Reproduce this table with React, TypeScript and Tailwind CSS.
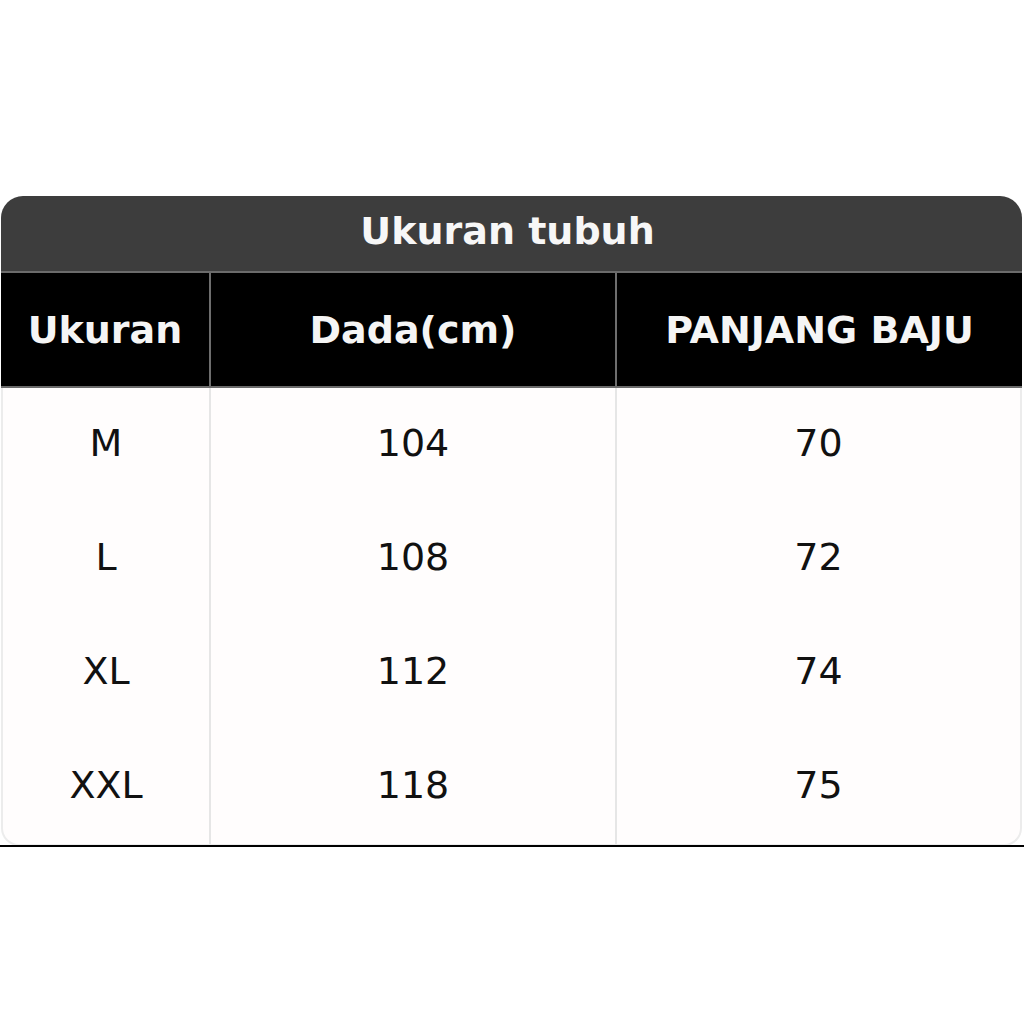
const rows = [
  { size: "M", dada: "104", panjang: "70" },
  { size: "L", dada: "108", panjang: "72" },
  { size: "XL", dada: "112", panjang: "74" },
  { size: "XXL", dada: "118", panjang: "75" },
];

export default function App() {
  return (
    <div
      className="w-[1024px] h-[1024px] bg-white pt-[196px]"
      style={{ fontFamily: '"DejaVu Sans", Verdana, sans-serif' }}
    >
      <div className="ml-[1px] mr-[2px]">
        {/* Title */}
        <div className="h-[75px] pb-[4px] pr-[8px] bg-[#3d3d3d] rounded-t-[22px] flex items-center justify-center text-[#f7f7f7] text-[38px] font-bold">
          Ukuran tubuh
        </div>
        <div className="h-[2px] bg-[#6b6b6b]" />

        {/* Header */}
        <div className="grid grid-cols-[208px_2px_404px_2px_1fr] h-[113px] bg-black text-[#f5f5f5] text-[38px] font-bold">
          <div className="flex items-center justify-center pt-[2px]">Ukuran</div>
          <div className="bg-[#6e6e6e]" />
          <div className="flex items-center justify-center pt-[2px]">Dada(cm)</div>
          <div className="bg-[#6e6e6e]" />
          <div className="flex items-center justify-center pt-[2px]">PANJANG BAJU</div>
        </div>
        <div className="h-[2px] bg-[#6b6b6b]" />

        {/* Body */}
        <div className="border-x-2 border-b-2 border-[#ececec] rounded-b-[18px] bg-[#fffdfd] text-[#111] text-[38px]">
          {rows.map((r) => (
            <div key={r.size} className="grid grid-cols-[206px_2px_404px_2px_1fr] h-[114px]">
              <div className="flex items-center justify-center pb-[4px]">{r.size}</div>
              <div className="bg-[#e6e6e6]" />
              <div className="flex items-center justify-center pb-[4px]">{r.dada}</div>
              <div className="bg-[#e6e6e6]" />
              <div className="flex items-center justify-center pb-[4px]">{r.panjang}</div>
            </div>
          ))}
        </div>
      </div>
      <div className="h-[2px] bg-black -mt-[1px]" />
    </div>
  );
}
